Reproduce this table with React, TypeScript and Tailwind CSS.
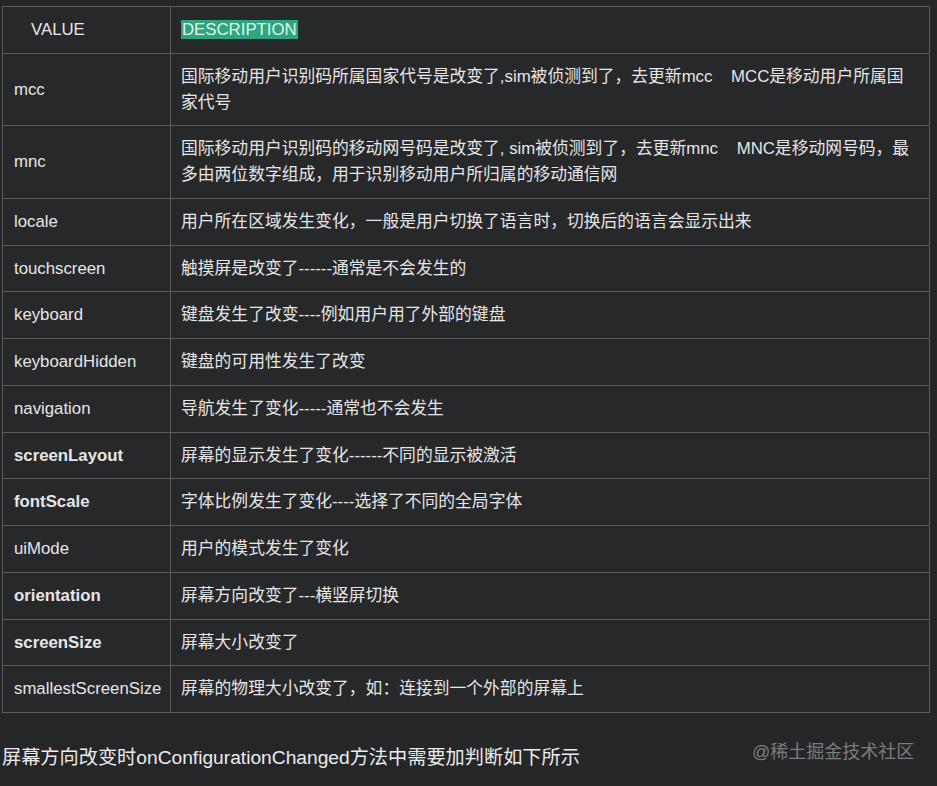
const rows: { k: string; v: string; bold?: boolean }[] = [
  { k: 'mcc', v: '国际移动用户识别码所属国家代号是改变了,sim被侦测到了，去更新mcc\u00a0\u00a0\u00a0 MCC是移动用户所属国家代号' },
  { k: 'mnc', v: '国际移动用户识别码的移动网号码是改变了, sim被侦测到了，去更新mnc\u00a0\u00a0\u00a0 MNC是移动网号码，最多由两位数字组成，用于识别移动用户所归属的移动通信网' },
  { k: 'locale', v: '用户所在区域发生变化，一般是用户切换了语言时，切换后的语言会显示出来' },
  { k: 'touchscreen', v: '触摸屏是改变了------通常是不会发生的' },
  { k: 'keyboard', v: '键盘发生了改变----例如用户用了外部的键盘' },
  { k: 'keyboardHidden', v: '键盘的可用性发生了改变' },
  { k: 'navigation', v: '导航发生了变化-----通常也不会发生' },
  { k: 'screenLayout', v: '屏幕的显示发生了变化------不同的显示被激活', bold: true },
  { k: 'fontScale', v: '字体比例发生了变化----选择了不同的全局字体', bold: true },
  { k: 'uiMode', v: '用户的模式发生了变化' },
  { k: 'orientation', v: '屏幕方向改变了---横竖屏切换', bold: true },
  { k: 'screenSize', v: '屏幕大小改变了', bold: true },
  { k: 'smallestScreenSize', v: '屏幕的物理大小改变了，如：连接到一个外部的屏幕上' },
]

export default function App() {
  return (
    <div
      className="relative min-h-[786px] w-[937px] bg-[#252628] pt-[6px] text-[#e6e6e6]"
      style={{ fontFamily: '"Liberation Sans", Arial, "Noto Sans CJK SC", sans-serif' }}
    >
      <table className="ml-[2px] w-[928px] table-fixed border-collapse bg-[#27282a] text-[16.8px] leading-[25.75px]">
        <colgroup>
          <col className="w-[168px]" />
          <col />
        </colgroup>
        <thead>
          <tr>
            <th className="border border-[#5c5c5c] py-[10px] pl-[28px] text-left font-normal">VALUE</th>
            <th className="border border-[#5c5c5c] px-[10px] py-[10px] text-left font-normal">
              <span className="bg-[#2ea57e] px-px text-[#dff5ec]">DESCRIPTION </span>
            </th>
          </tr>
        </thead>
        <tbody>
          {rows.map((r) => (
            <tr key={r.k}>
              <td className={`border border-[#5c5c5c] py-[10px] pl-[11px] pr-[6px] ${r.bold ? 'font-bold' : ''}`}>{r.k}</td>
              <td className="border border-[#5c5c5c] py-[10px] pl-[10px] pr-[10px]">{r.v}</td>
            </tr>
          ))}
        </tbody>
      </table>
      <p className="mt-[30px] pl-[2px] text-[19.2px] leading-[30px] text-[#ececec]">
        屏幕方向改变时onConfigurationChanged方法中需要加判断如下所示
      </p>
      <span className="absolute left-[752px] top-[739px] text-[18px] text-[#7c7c7c]">@稀土掘金技术社区</span>
    </div>
  )
}
